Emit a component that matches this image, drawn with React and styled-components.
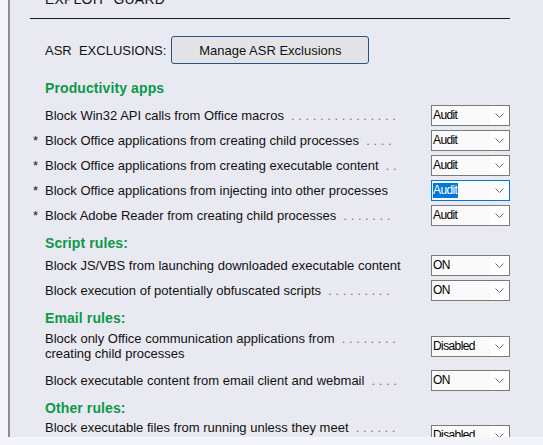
import React from "react";
import styled, { createGlobalStyle } from "styled-components";

const GlobalStyle = createGlobalStyle`
  html, body { margin: 0; padding: 0; }
  body {
    background: #f4f4fb;
    font-family: "Liberation Sans", Arial, sans-serif;
    color: #111;
  }
`;

const Panel = styled.div`
  margin-left: 8px;
  height: 437px;
  overflow: hidden;
  border-left: 2px solid #8c8c8c;
  background: #e9e9f2;
  padding-left: 35px;
  box-sizing: border-box;
  display: flex;
  flex-direction: column;
  align-items: flex-start;
`;

const Title = styled.div`
  margin-top: -9px;
  font-size: 14px;
  line-height: 16px;
  letter-spacing: 0.2px;
  white-space: pre;
  color: #111;
`;

const Rule = styled.div`
  margin: 11px 0 0 -15px;
  width: 480px;
  border-top: 1px solid #1a1a1a;
`;

const AsrRow = styled.div`
  display: flex;
  align-items: center;
  gap: 5px;
  margin-top: 17px;
`;

const AsrLabel = styled.span`
  font-size: 13px;
  white-space: pre;
`;

const Button = styled.button`
  width: 198px;
  height: 28px;
  box-sizing: border-box;
  border: 1px solid #24538a;
  border-radius: 3px;
  background: #e4e4e6;
  font-family: "Liberation Sans", Arial, sans-serif;
  font-size: 13px;
  color: #111;
  padding: 0;
`;

const Heading = styled.div`
  margin-top: ${(p) => p.$top}px;
  font-size: 14px;
  font-weight: bold;
  line-height: 18px;
  color: #0b9a48;
  letter-spacing: 0.1px;
`;

const Rows = styled.div`
  display: flex;
  flex-direction: column;
  margin-top: ${(p) => p.$top}px;
`;

const Row = styled.div`
  display: grid;
  grid-template-columns: 12px 386px 79px;
  align-items: center;
  height: ${(p) => p.$h}px;
  margin-left: -12px;
  margin-top: ${(p) => p.$top || 0}px;
`;

const Star = styled.span`
  font-size: 13px;
  line-height: 15px;
  padding-left: 0px;
`;

const Label = styled.span`
  font-size: 13px;
  line-height: 15px;
  white-space: pre;
`;

const Dots = styled.span`
  color: #9a6c3c;
`;

const Combo = styled.div`
  width: 79px;
  height: 21px;
  box-sizing: border-box;
  border: 1px solid ${(p) => (p.$focus ? "#0078d7" : "#7a7a7a")};
  background: #fafafa;
  display: flex;
  align-items: center;
  font-size: 12px;
  letter-spacing: -0.6px;
  color: #000;
`;

const Value = styled.span`
  margin-left: 1px;
  padding: 0 1px 0 0;
  line-height: 15px;
  background: ${(p) => (p.$focus ? "#0078d7" : "transparent")};
  color: ${(p) => (p.$focus ? "#fff" : "#000")};
`;

const Arrow = styled.span`
  margin-left: auto;
  width: 19px;
  height: 100%;
  background: #fff;
  display: flex;
  align-items: center;
  justify-content: center;
`;

const Chevron = () => (
  <svg width="9" height="5" viewBox="0 0 9 5">
    <path d="M0.5 0.5 L4.5 4.5 L8.5 0.5" fill="none" stroke="#6b6b6b" strokeWidth="1" />
  </svg>
);

const dots = (n) => (n ? "  " + Array(n).fill(".").join(" ") : "");

const Select = ({ value, focus }) => (
  <Combo $focus={focus}>
    <Value $focus={focus}>{value}</Value>
    <Arrow>
      <Chevron />
    </Arrow>
  </Combo>
);

const RuleRow = ({ star, lines, n, value, focus, h = 25, top }) => (
  <Row $h={h} $top={top}>
    <Star>{star ? "*" : ""}</Star>
    <Label>
      {lines.map((l, i) => (
        <React.Fragment key={i}>
          {i > 0 && "\n"}
          {l}
          {i === 0 && <Dots>{dots(n)}</Dots>}
        </React.Fragment>
      ))}
    </Label>
    <Select value={value} focus={focus} />
  </Row>
);

export default function App() {
  return (
    <>
      <GlobalStyle />
      <Panel>
        <Title>{"EXPLOIT  GUARD"}</Title>
        <Rule />
        <AsrRow>
          <AsrLabel>{"ASR  EXCLUSIONS:"}</AsrLabel>
          <Button>Manage ASR Exclusions</Button>
        </AsrRow>

        <Heading $top={15}>Productivity apps</Heading>
        <Rows $top={6}>
          <RuleRow lines={["Block Win32 API calls from Office macros"]} n={15} value="Audit" />
          <RuleRow star lines={["Block Office applications from creating child processes"]} n={4} value="Audit" />
          <RuleRow star lines={["Block Office applications from creating executable content"]} n={2} value="Audit" />
          <RuleRow star lines={["Block Office applications from injecting into other processes"]} n={0} value="Audit" focus />
          <RuleRow star lines={["Block Adobe Reader from creating child processes"]} n={7} value="Audit" />
        </Rows>

        <Heading $top={6}>Script rules:</Heading>
        <Rows $top={1}>
          <RuleRow lines={["Block JS/VBS from launching downloaded executable content"]} n={0} value="ON" />
          <RuleRow lines={["Block execution of potentially obfuscated scripts"]} n={9} value="ON" />
        </Rows>

        <Heading $top={6}>Email rules:</Heading>
        <Rows $top={1}>
          <RuleRow
            lines={["Block only Office communication applications from", "creating child processes"]}
            n={8}
            value="Disabled"
            h={36}
          />
          <RuleRow lines={["Block executable content from email client and webmail"]} n={4} value="ON" top={4} />
        </Rows>

        <Heading $top={6}>Other rules:</Heading>
        <Rows $top={0}>
          <RuleRow
            lines={["Block executable files from running unless they meet", "a prevalence, age, or trusted list criterion"]}
            n={6}
            value="Disabled"
            h={36}
          />
        </Rows>
      </Panel>
    </>
  );
}
